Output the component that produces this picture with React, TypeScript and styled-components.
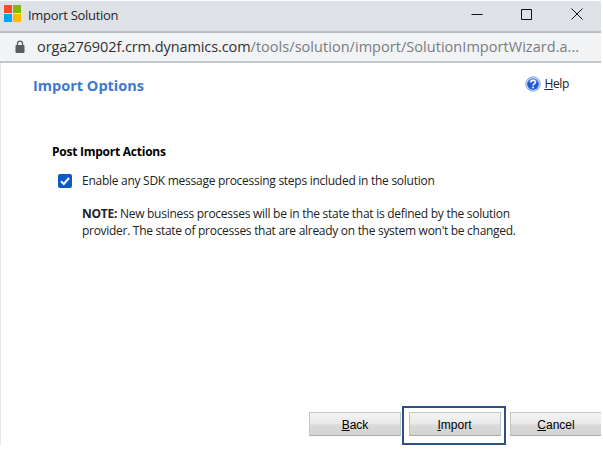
import React from "react";
import styled, { createGlobalStyle } from "styled-components";

const GlobalStyle = createGlobalStyle`
  body { margin: 0; background: #fff; overflow: hidden; }
  * { box-sizing: border-box; }
`;

const Window = styled.div`
  width: 601px;
  height: 451px;
  padding-top: 1px;
  display: flex;
  flex-direction: column;
  font-family: "Open Sans", "Noto Sans", sans-serif;
  white-space: nowrap;
  color: #000;
`;

const TitleBar = styled.header`
  height: 32px;
  flex: none;
  display: flex;
  align-items: center;
  padding: 0 18px 5px 4px;
  background: #dee1e6;
  border-bottom: 2px solid #b9bcc0;
`;

const WindowTitle = styled.span`
  flex: 1;
  margin: 3px 0 0 7px;
  font-size: 13px;
  line-height: 18px;
  letter-spacing: -0.3px;
  color: #26282b;
`;

const WindowControls = styled.div`
  display: flex;
  gap: 38px;
  svg { display: block; }
`;

const AddressBar = styled.div`
  height: 30px;
  flex: none;
  display: flex;
  align-items: center;
  padding-left: 15px;
  background: #f1f3f4;
  border-bottom: 2px solid #c4c6ca;
`;

const Url = styled.span`
  margin: 0 0 0 12px;
  font-size: 14.5px;
  line-height: 20px;
  letter-spacing: 0.04px;
  color: #7a7c7f;
`;

const Host = styled.span`
  letter-spacing: -0.09px;
  color: #303236;
`;

const Page = styled.main`
  height: 382px;
  display: flex;
  flex-direction: column;
  border-left: 1px solid #e6e6e6;
`;

const PageHeader = styled.div`
  display: flex;
  justify-content: space-between;
  padding: 12px 32px 0 32px;
`;

const Heading = styled.h1`
  margin: 0;
  font-size: 14.5px;
  line-height: 22px;
  font-weight: 700;
  color: #3f78cf;
`;

const HelpLink = styled.a`
  display: flex;
  align-items: center;
  gap: 3px;
  height: 17px;
  font-size: 12px;
  letter-spacing: -0.35px;
  color: #222;
`;

const Options = styled.section`
  flex: 1;
  padding: 46px 0 0 51px;
  font-size: 12px;
  line-height: 17px;
`;

const SectionTitle = styled.h2`
  margin: 0;
  font-size: 12px;
  line-height: 18px;
  font-weight: 700;
  letter-spacing: -0.25px;
`;

const CheckRow = styled.label`
  display: flex;
  align-items: center;
  height: 17px;
  margin: 11px 0 0 6px;
  gap: 10px;
`;

const Text = styled.span<{ $spacing?: number }>`
  letter-spacing: ${(p) => p.$spacing ?? 0}px;
  color: #222;
`;

const CheckBox = styled.span`
  display: flex;
  width: 14px;
  height: 14px;
  border-radius: 2px;
  background: #0b5bc6;
`;

const Note = styled.div`
  display: flex;
  flex-direction: column;
  margin: 16px 0 0 30px;
`;

const Footer = styled.footer`
  display: flex;
  align-items: flex-start;
  justify-content: flex-end;
  height: 39px;
`;

const Highlight = styled.div`
  display: flex;
  justify-content: center;
  width: 104px;
  height: 39px;
  margin: 0 4px 0 1px;
  padding: 4px 0 0 1px;
  border: 2px solid #2f4f87;
`;

const Button = styled.button<{ $open?: boolean }>`
  width: ${(p) => (p.$open ? 91 : 92)}px;
  height: 24px;
  padding: 1px 0 0;
  border: 1px solid #c2c4c6;
  border-right-width: ${(p) => (p.$open ? 0 : 1)}px;
  border-bottom-color: #a9abad;
  background: linear-gradient(#f4f4f4 0%, #e9e9e9 48%, #d9d9d9 55%, #d3d3d3 100%);
  font: 12px "Liberation Sans", Arial, sans-serif;
  color: #000;

  ${Footer} > & {
    margin-top: 6px;
  }
`;

const Logo = () => (
  <svg width="17" height="17" viewBox="0 0 17 17">
    <path fill="#f25022" d="M0 0h8v8H0z" />
    <path fill="#7fba00" d="M9 0h8v8H9z" />
    <path fill="#00a4ef" d="M0 9h8v8H0z" />
    <path fill="#ffb900" d="M9 9h8v8H9z" />
  </svg>
);

const Lock = () => (
  <svg width="10" height="14" viewBox="0 0 10 14">
    <rect x="0.5" y="5" width="9" height="8" rx="1" fill="#5a5c60" />
    <path d="M2.5 5.5V3.6a2.5 2.5 0 0 1 5 0v1.9" fill="none" stroke="#5a5c60" strokeWidth="1.3" />
  </svg>
);

const HelpIcon = () => (
  <svg width="16" height="16" viewBox="0 0 16 16">
    <defs>
      <linearGradient id="ball" x1="0" y1="0" x2="0" y2="1">
        <stop offset="0" stopColor="#6d9cf0" />
        <stop offset="0.5" stopColor="#1f56cf" />
        <stop offset="1" stopColor="#2d6ae6" />
      </linearGradient>
    </defs>
    <circle cx="8" cy="8" r="7.200" fill="#dbe7fa" stroke="#7fa4e2" />
    <circle cx="8" cy="8" r="5.900" fill="url(#ball)" />
    <path d="M5.800 6.500c0-3.200 4.600-2.900 4.600-.3C10.400 7.900 8 7.800 8 9.600" fill="none" stroke="#fff" strokeWidth="1.5" />
    <rect x="7.200" y="10.700" width="1.600" height="1.500" fill="#fff" />
  </svg>
);

export default function App() {
  return (
    <>
      <GlobalStyle />
      <Window>
        <TitleBar>
          <Logo />
          <WindowTitle>Import Solution</WindowTitle>
          <WindowControls>
            <svg width="12" height="12" viewBox="0 0 12 12" stroke="#111">
              <path d="M0.500 6.500H11.500" />
            </svg>
            <svg width="12" height="12" viewBox="0 0 12 12" stroke="#111" fill="none">
              <path d="M0.500 1.500h10v10h-10z" />
            </svg>
            <svg width="12" height="12" viewBox="0 0 12 12" stroke="#111">
              <path d="M0.500 0.500l11 11M11.500 0.500l-11 11" />
            </svg>
          </WindowControls>
        </TitleBar>
        <AddressBar>
          <Lock />
          <Url>
            <Host>orga276902f.crm.dynamics.com</Host>/tools/solution/import/SolutionImportWizard.a...
          </Url>
        </AddressBar>
        <Page>
          <PageHeader>
            <Heading>Import Options</Heading>
            <HelpLink>
              <HelpIcon />
              <span><u>H</u>elp</span>
            </HelpLink>
          </PageHeader>
          <Options>
            <SectionTitle>Post Import Actions</SectionTitle>
            <CheckRow>
              <CheckBox>
                <svg width="14" height="14" viewBox="0 0 14 14">
                  <path d="M3 7.200l2.800 2.800L11 4" fill="none" stroke="#fff" strokeWidth="2" />
                </svg>
              </CheckBox>
              <Text $spacing={-0.27}>Enable any SDK message processing steps included in the solution</Text>
            </CheckRow>
            <Note>
              <Text $spacing={-0.27}><b>NOTE:</b> New business processes will be in the state that is defined by the solution</Text>
              <Text $spacing={-0.29}>provider. The state of processes that are already on the system won't be changed.</Text>
            </Note>
          </Options>
          <Footer>
            <Button><u>B</u>ack</Button>
            <Highlight>
              <Button><u>I</u>mport</Button>
            </Highlight>
            <Button $open><u>C</u>ancel</Button>
          </Footer>
        </Page>
      </Window>
    </>
  );
}
